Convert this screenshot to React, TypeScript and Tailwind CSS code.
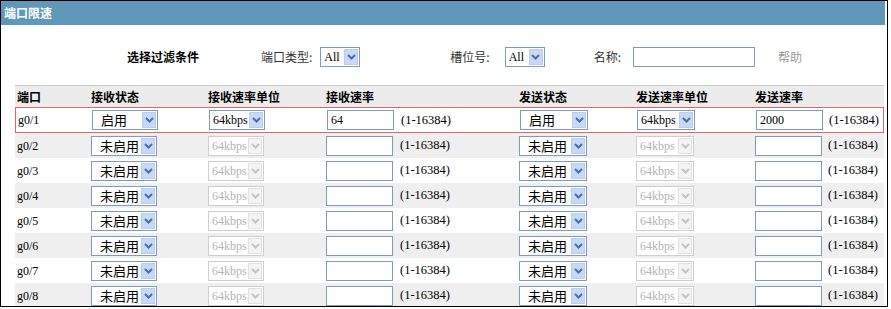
import React from "react";

const FONT = { fontFamily: '"Liberation Serif", "Noto Sans CJK SC", serif' };
const CJK = { fontFamily: '"Noto Sans CJK SC", sans-serif' };

function Chevron({ disabled }: { disabled?: boolean }) {
  return (
    <svg width="9" height="6" viewBox="0 0 9 6">
      <path
        d="M1 1 L4.5 4.5 L8 1"
        fill="none"
        stroke={disabled ? "#c4c4c4" : "#4a6ea9"}
        strokeWidth="2"
      />
    </svg>
  );
}

function Select({
  value,
  width,
  disabled,
  cjk,
}: {
  value: string;
  width: string;
  disabled?: boolean;
  cjk?: boolean;
}) {
  return (
    <div
      className={`flex h-[20px] items-center justify-between border bg-white ${width} ${
        disabled ? "border-[#cfcfcf]" : "border-[#7f9db9]"
      }`}
    >
      <span
        className={`whitespace-nowrap ${cjk ? "pl-[8px] text-[13px]" : "pl-[3px] text-[12px]"} ${
          disabled ? "text-[#b4b4b4]" : "text-black"
        }`}
        style={cjk ? CJK : FONT}
      >
        {value}
      </span>
      <span
        className={`mr-[1px] flex h-[16px] w-[14px] items-center justify-center border ${
          disabled ? "border-[#e2e2e2] bg-[#f4f4f4]" : "border-[#b9cdf3] bg-[#c8d8f8]"
        }`}
      >
        <Chevron disabled={disabled} />
      </span>
    </div>
  );
}

function TextBox({ value, width }: { value?: string; width: string }) {
  return (
    <div
      className={`flex h-[20px] shrink-0 items-center border border-[#7f9db9] bg-white pl-[3px] text-[12px] ${width}`}
      style={FONT}
    >
      {value}
    </div>
  );
}

function Range() {
  return (
    <span className="whitespace-nowrap text-[12.5px]" style={FONT}>
      (1-16384)
    </span>
  );
}

const cols = "grid grid-cols-[74px_117px_118px_193px_117px_119px_131px]";

const ports = ["g0/1", "g0/2", "g0/3", "g0/4", "g0/5", "g0/6", "g0/7", "g0/8"];

function Row({ port, index }: { port: string; index: number }) {
  const first = index === 0;
  const gray = index % 2 === 1;
  return (
    <div
      className={`${cols} shrink-0 items-center overflow-hidden ${
        first ? "h-[26px] border border-[#d96a6a]" : "h-[25px]"
      } ${gray ? "bg-[#efefef]" : "bg-white"}`}
    >
      <div className="pl-[2px] text-[12px]" style={FONT}>
        {port}
      </div>
      <div className="pl-[2px]">
        <Select value={first ? "启用" : "未启用"} width="w-[66px]" cjk />
      </div>
      <div className="pl-[2px]">
        <Select value="64kbps" width="w-[56px]" disabled={!first} />
      </div>
      <div className="flex items-center gap-[7px] pl-[2px]">
        <TextBox value={first ? "64" : ""} width="w-[67px]" />
        <Range />
      </div>
      <div className="pl-[2px]">
        <Select value={first ? "启用" : "未启用"} width="w-[68px]" cjk />
      </div>
      <div className="pl-[2px]">
        <Select value="64kbps" width="w-[58px]" disabled={!first} />
      </div>
      <div className="flex items-center gap-[6px] pl-[2px]">
        <TextBox value={first ? "2000" : ""} width="w-[67px]" />
        <Range />
      </div>
    </div>
  );
}

export default function App() {
  const headers = ["端口", "接收状态", "接收速率单位", "接收速率", "发送状态", "发送速率单位", "发送速率"];
  return (
    <div className="h-[309px] w-[891px] bg-white" style={FONT}>
      <div className="flex h-[307px] w-[888px] flex-col overflow-hidden border border-black">
        <div className="mr-[2px] flex h-[24px] shrink-0 items-center bg-[#5f98b8] pl-[3px]">
          <span className="text-[12px] font-bold text-white" style={CJK}>
            端口限速
          </span>
        </div>

        <div className="flex h-[60px] shrink-0 items-start pt-[22px] text-[12px]" style={CJK}>
          <div className="flex h-[20px] items-center">
            <span className="ml-[126px] font-bold">选择过滤条件</span>
            <span className="ml-[62px] text-[#333]">端口类型:</span>
            <span className="ml-[8px]">
              <Select value="All" width="w-[40px]" />
            </span>
            <span className="ml-[90px] text-[#333]">槽位号:</span>
            <span className="ml-[15px]">
              <Select value="All" width="w-[40px]" />
            </span>
            <span className="ml-[49px] text-[#333]">名称:</span>
            <span className="ml-[12px]">
              <div className="h-[20px] w-[122px] border border-[#7f9db9] bg-white" />
            </span>
            <span className="ml-[23px] text-[#999]">帮助</span>
          </div>
        </div>

        <div className="ml-[14px] flex w-[869px] flex-col">
          <div
            className={`${cols} h-[22px] shrink-0 items-center border-t border-[#cccccc] bg-[#ececec] text-[12px] font-bold`}
            style={CJK}
          >
            {headers.map((h) => (
              <div key={h} className="pl-[2px]">
                {h}
              </div>
            ))}
          </div>
          {ports.map((p, i) => (
            <Row key={p} port={p} index={i} />
          ))}
        </div>
      </div>
    </div>
  );
}
